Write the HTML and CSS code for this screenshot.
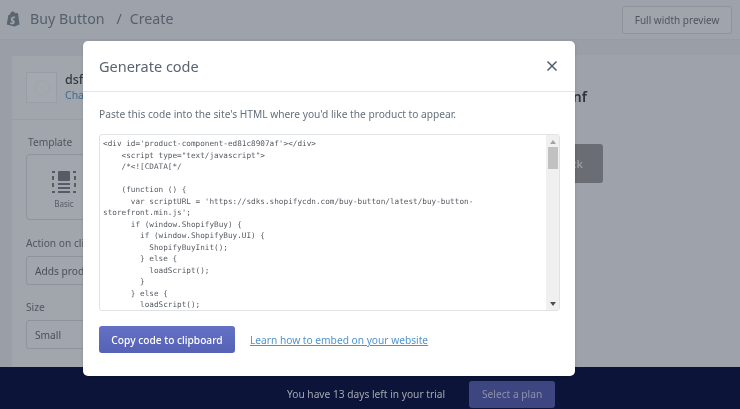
FILE: index.html
```html
<!DOCTYPE html>
<html lang="en">
<head>
<meta charset="utf-8">
<title>Buy Button / Create</title>
<link rel="stylesheet" href="styles.css">
</head>
<body>
<div class="page">
  <header class="topbar">
    <svg class="logo" viewBox="0 0 14 16" width="14" height="16" aria-hidden="true">
      <path fill="#5b6570" d="M.8 13.500 2.300 4.200 4 3.600C4.400 1.600 5.600.4 7 .4c1 0 1.600.6 2 1.800L10.500 2l1.500.2 1.500 11.300-5 2z"/>
      <path fill="#9ea2aa" d="M9.200 5.800l-.5 1.700s-.6-.3-1.200-.3c-.9 0-1 .5-1 .7 0 .8 2.200 1.100 2.200 3 0 1.500-1 2.400-2.300 2.400-1.500 0-2.300-.9-2.300-.9l.4-1.300s.8.700 1.500.7c.4 0 .6-.3.6-.6 0-1-1.800-1.100-1.800-2.800 0-1.400 1-2.800 3.100-2.800.8 0 1.300.2 1.300.2z"/>
    </svg>
    <span class="crumb">Buy Button</span>
    <span class="crumb slash">/</span>
    <span class="crumb">Create</span>
    <span class="preview-btn">Full width preview</span>
  </header>
  <main class="content">
    <section class="card">
      <div class="card-head">
        <div class="thumb">
          <svg viewBox="0 0 20 20" width="20" height="20" aria-hidden="true"><circle cx="10" cy="10" r="7.500" fill="none" stroke="#a0a4ab" stroke-width="1"/><path d="M5 5l10 10" stroke="#a0a4ab" stroke-width="1"/></svg>
        </div>
        <div class="prod">
          <div class="prod-name">dsf</div>
          <div class="prod-link">Change</div>
        </div>
      </div>
      <div class="card-body">
        <div class="field-label tpl-label">Template</div>
        <div class="tpl">
          <svg class="tpl-icon" viewBox="0 0 24 24" width="24" height="24" aria-hidden="true">
            <rect x="6" y="1" width="12" height="10" rx="1" fill="#565c66"/>
            <rect x="6" y="13" width="12" height="2" fill="#565c66"/>
            <rect x="6" y="17" width="12" height="2" fill="#565c66"/>
            <rect x="6" y="21" width="12" height="2" fill="#565c66"/>
            <path fill="#565c66" d="M0 1h3v2H0zM21 1h3v2h-3zM0 6h2v4H0zM22 6h2v4h-2zM0 13h2v4H0zM22 13h2v4h-2zM0 21h3v2H0zM21 21h3v2h-3z"/>
          </svg>
          <span class="tpl-name">Basic</span>
        </div>
        <div class="field-label">Action on click</div>
        <div class="select">Adds product to cart</div>
        <div class="field-label">Size</div>
        <div class="select">Small</div>
      </div>
    </section>
    <section class="side">
      <div class="side-title">dsfdsfnf</div>
      <div class="side-btn">Buy now quick</div>
    </section>
  </main>
  <footer class="trial">
    <span class="trial-text">You have 13 days left in your trial</span>
    <span class="plan-btn">Select a plan</span>
  </footer>
</div>
<div class="modal" role="dialog">
  <div class="modal-head">
    <h1 class="modal-title">Generate code</h1>
    <svg class="close" viewBox="0 0 12 12" width="12" height="12" aria-hidden="true"><path d="M1.500 1.500l9 9M10.500 1.500l-9 9" stroke="#4f5c69" stroke-width="1.500" fill="none"/></svg>
  </div>
  <div class="modal-body">
    <p class="intro">Paste this code into the site's HTML where you'd like the product to appear.</p>
    <div class="codebox">
      <pre class="code">&lt;div id='product-component-ed81c8907af'&gt;&lt;/div&gt;
    &lt;script type="text/javascript"&gt;
    /*&lt;![CDATA[*/

    (function () {
      var scriptURL = 'https://sdks.shopifycdn.com/buy-button/latest/buy-button-
storefront.min.js';
      if (window.ShopifyBuy) {
        if (window.ShopifyBuy.UI) {
          ShopifyBuyInit();
        } else {
          loadScript();
        }
      } else {
        loadScript();</pre>
      <div class="scrollbar">
        <svg class="arrow" viewBox="0 0 6 4" width="6" height="4" aria-hidden="true"><path d="M3 0l3 4H0z" fill="#a3a3a3"/></svg>
        <div class="thumb-bar"></div>
        <div class="track"></div>
        <svg class="arrow" viewBox="0 0 6 4" width="6" height="4" aria-hidden="true"><path d="M0 0h6L3 4z" fill="#505050"/></svg>
      </div>
    </div>
    <div class="actions">
      <span class="copy-btn">Copy code to clipboard</span>
      <a class="learn" href="#">Learn how to embed on your website</a>
    </div>
  </div>
</div>
</body>
</html>
```
FILE: styles.css
```css
* { box-sizing: border-box; }
html, body { margin: 0; padding: 0; height: 100%; overflow: hidden; }
body {
  width: 740px;
  height: 409px;
  position: relative;
  font-family: "Noto Sans", "Open Sans", sans-serif;
  background: #9ea2aa;
  filter: blur(0.4px);
}
.page { height: 409px; display: flex; flex-direction: column; overflow: hidden; }

.topbar {
  height: 40px;
  flex: none;
  display: flex;
  align-items: center;
  padding: 0 8px 2px 6px;
  border-bottom: 1px solid #979ba3;
  color: #545d69;
}
.logo { margin-right: 10px; flex: none; }
.crumb { font-size: 14.200px; color: #565f6b; }
.slash { margin: 0 8px 0 12px; }
.preview-btn {
  margin-left: auto;
  width: 110px;
  height: 28px;
  margin-top: 3px;
  border: 1px solid #8f939b;
  border-radius: 3px;
  font-size: 10px;
  color: #4f5660;
  background: #a0a4ab;
  display: flex;
  align-items: center;
  justify-content: center;
}

.content { flex: 1; min-height: 0; display: flex; padding-left: 11px; padding-top: 15px; background: #9a9ea6; }
.card { width: 250px; background: #a1a5ac; border: 1px solid #9b9fa7; border-bottom: 0; flex: none; }
.card-head { height: 64px; display: flex; align-items: center; padding: 0 14px; border-bottom: 1px solid #999da5; }
.thumb { width: 31px; height: 31px; border: 1px solid #999da5; background: #a4a8af; margin-right: 8px; display: flex; align-items: center; justify-content: center; flex: none; }
.prod-name { font-size: 12.500px; font-weight: 500; color: #33383f; line-height: 16px; }
.prod-link { font-size: 10.500px; color: #3f6c92; line-height: 15px; }
.card-body { padding: 15px 14px; }
.field-label { font-size: 10.200px; color: #50565f; line-height: 15px; }
.tpl-label { margin-left: 2px; margin-bottom: 4px; }
.tpl {
  width: 76px;
  height: 66px;
  border: 1px solid #8f939b;
  border-radius: 4px;
  display: flex;
  flex-direction: column;
  align-items: center;
  padding-top: 15px;
  margin-bottom: 16px;
  background: #a2a6ad;
}
.tpl-icon { display: block; width: 24px; height: 24px; flex: none; }
.tpl-name { font-size: 8px; color: #565c66; margin-top: 4px; }
.select {
  width: 200px;
  height: 29px;
  border: 1px solid #8f939b;
  border-radius: 3px;
  font-size: 10.200px;
  color: #4a5059;
  display: flex;
  align-items: center;
  padding-left: 8px;
  margin: 5px 0 15px;
  background: #a1a5ac;
}

.side { flex: 1; padding: 33px 0 0 270px; background: #9ea2aa; }
.side-title { font-size: 14px; font-weight: 600; color: #2f3338; white-space: nowrap; line-height: 18px; }
.side-btn {
  width: 120px;
  height: 39px;
  margin-top: 38px;
  margin-left: -48px;
  background: #6a6d74;
  border-radius: 3px;
  font-size: 11px;
  font-weight: 600;
  color: #9a9da3;
  text-align: right;
  line-height: 39px;
  padding-right: 20px;
  white-space: nowrap;
}

.trial {
  height: 42px;
  flex: none;
  background: #0c1439;
  display: flex;
  align-items: center;
  padding: 12px 0 0 287px;
  gap: 24px;
}
.trial-text { font-size: 10.200px; color: #a5a8b1; }
.plan-btn {
  width: 86px;
  height: 27px;
  border-radius: 3px;
  background: #3e4682;
  color: #8d90ab;
  font-size: 10.200px;
  display: flex;
  align-items: center;
  justify-content: center;
}

.modal {
  position: absolute;
  left: 83px;
  top: 41px;
  width: 492px;
  height: 335px;
  background: #fff;
  border-radius: 5px;
  box-shadow: 0 1px 3px rgba(0,0,0,.15);
}
.modal-head {
  height: 51px;
  border-bottom: 1px solid #e2e5e9;
  display: flex;
  align-items: center;
  justify-content: space-between;
  padding: 0 17px 0 16px;
}
.modal-title { margin: 0; font-size: 14.500px; font-weight: 400; color: #5a6470; }
.close { display: block; }
.modal-body { padding: 15px 15px 0 16px; }
.intro { margin: 0 0 12px; font-size: 10.200px; line-height: 15px; color: #65707c; }
.codebox {
  height: 177px;
  border: 1px solid #dfe2e6;
  border-radius: 3px;
  display: flex;
  overflow: hidden;
  background: #fff;
}
.code {
  flex: 1;
  margin: 0;
  padding: 3px 0 0 3px;
  font-family: "DejaVu Sans Mono", monospace;
  font-size: 7.700px;
  line-height: 11.500px;
  color: #565b62;
  white-space: pre;
}
.scrollbar {
  width: 13px;
  background: #f0f0f0;
  display: flex;
  flex-direction: column;
  align-items: center;
  padding: 5px 0 4px;
  flex: none;
}
.arrow { display: block; flex: none; }
.thumb-bar { width: 10px; height: 22px; margin-top: 3px; background: #c1c1c1; flex: none; }
.track { flex: 1; }
.actions { display: flex; align-items: center; margin-top: 15px; gap: 15px; }
.copy-btn {
  width: 136px;
  height: 27px;
  border-radius: 3px;
  background: linear-gradient(#6370c4, #5562b5);
  color: #fff;
  font-size: 10.200px;
  font-weight: 500;
  display: flex;
  align-items: center;
  justify-content: center;
}
.learn { font-size: 10.200px; color: #4f94d0; text-decoration: underline; }
```
